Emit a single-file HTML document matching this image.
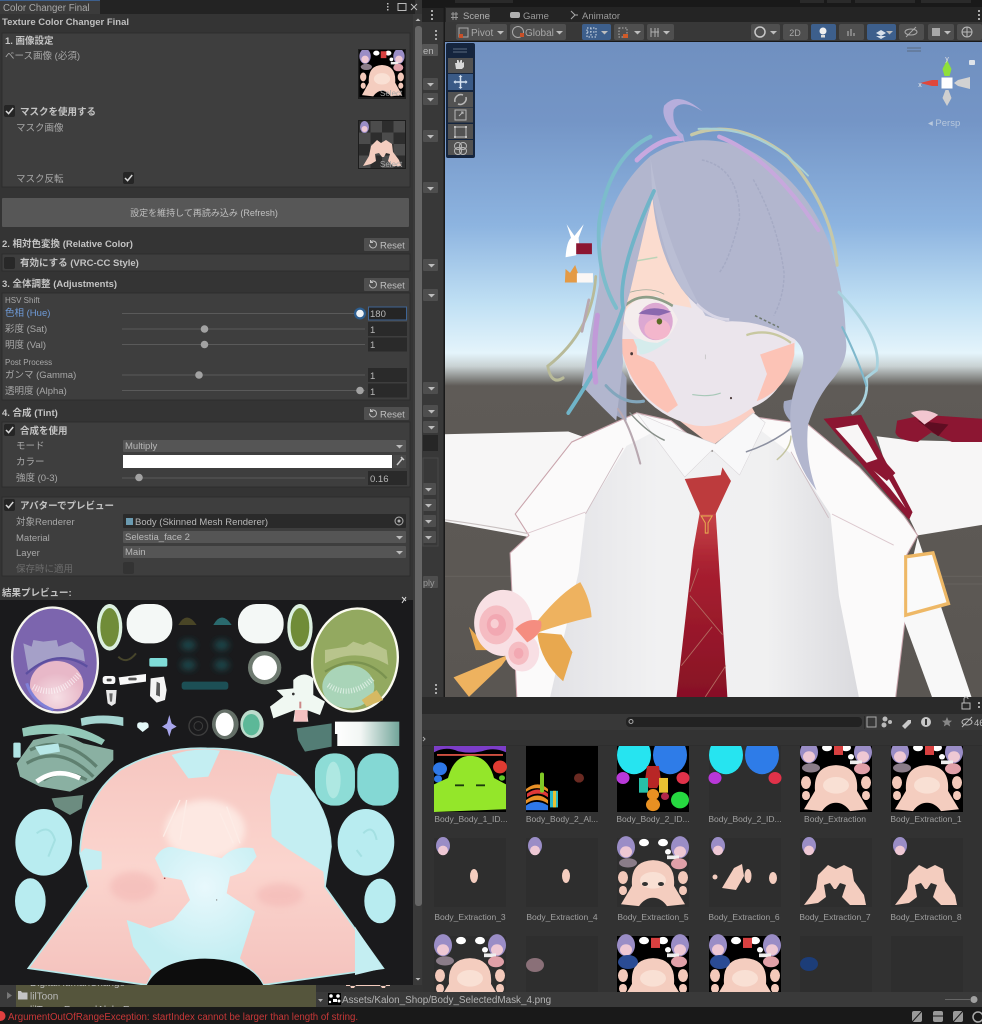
<!DOCTYPE html>
<html><head><meta charset="utf-8"><style>
html,body{margin:0;padding:0;background:#333;width:982px;height:1024px;overflow:hidden}
svg{display:block;font-family:"Liberation Sans","Noto Sans CJK JP",sans-serif}
#root{filter:blur(.35px)}
.l{font-size:9.5px;fill:#a8a8a8}
.b{font-size:9.5px;fill:#c4c4c4;font-weight:bold}
.g{font-size:8.5px;fill:#a0a0a0;text-anchor:middle}
.v{font-size:9.5px;fill:#b8b8b8}
</style></head><body>
<svg id="root" width="982" height="1024" viewBox="0 0 982 1024" xmlns="http://www.w3.org/2000/svg">
<defs>
<filter id="s" x="-5%" y="-5%" width="110%" height="110%"><feGaussianBlur stdDeviation="0.35"/></filter>
<filter id="m" x="-30%" y="-30%" width="160%" height="160%"><feGaussianBlur stdDeviation="10"/></filter>
<linearGradient id="sky" x1="0" y1="0" x2="0" y2="1">
<stop offset="0" stop-color="#7090c0"/><stop offset=".12" stop-color="#7495c6"/><stop offset=".28" stop-color="#8db4e0"/><stop offset=".4" stop-color="#c0e0f4"/><stop offset=".475" stop-color="#e4f4fb"/><stop offset=".495" stop-color="#c9d2d3"/><stop offset=".525" stop-color="#5f5b57"/><stop offset="1" stop-color="#5a5652"/>
</linearGradient>
<linearGradient id="shirt" x1="0" y1="0" x2="1" y2="0"><stop offset="0" stop-color="#e2e2e6"/><stop offset=".35" stop-color="#f1f1f2"/><stop offset=".7" stop-color="#f0f0f1"/><stop offset="1" stop-color="#dadade"/></linearGradient>
<linearGradient id="tie" x1="0" y1="0" x2="0" y2="1"><stop offset="0" stop-color="#c9474a"/><stop offset=".3" stop-color="#a82030"/><stop offset="1" stop-color="#861025"/></linearGradient>
<linearGradient id="gr" x1="0" y1="0" x2="1" y2="0"><stop offset="0" stop-color="#fff"/><stop offset=".4" stop-color="#f2f6f4"/><stop offset="1" stop-color="#72a59a"/></linearGradient>
<radialGradient id="pe" cx=".5" cy=".75" r=".5"><stop offset="0" stop-color="#f6dfe5"/><stop offset="1" stop-color="#e8b8c8"/></radialGradient>
<radialGradient id="fc" gradientUnits="userSpaceOnUse" cx="615" cy="860" r="230"><stop offset="0" stop-color="#e8f8fc"/><stop offset="1" stop-color="#c4eef2"/></radialGradient>
<linearGradient id="pp" x1="0" y1="0" x2="0" y2="1"><stop offset="0" stop-color="#f6c6c0"/><stop offset=".5" stop-color="#fbd5ce"/><stop offset="1" stop-color="#f4c2bd"/></linearGradient>
<clipPath id="cs"><rect x="445" y="42" width="537" height="655"/></clipPath>
<clipPath id="cg"><rect x="423" y="746" width="559" height="246"/></clipPath>
<clipPath id="ct"><rect x="0" y="600" width="413" height="385"/></clipPath>
<clipPath id="cf"><rect x="16" y="985" width="300" height="22"/></clipPath>

<g id="tp">
<ellipse cx="9" cy="10" rx="9" ry="12" fill="#9a8dc6"/><ellipse cx="9" cy="15" rx="6" ry="6" fill="#eec8d4"/>
<ellipse cx="63" cy="10" rx="9" ry="12" fill="#9a8dc6"/><ellipse cx="63" cy="15" rx="6" ry="6" fill="#eec8d4"/>
<ellipse cx="27" cy="5" rx="5" ry="4" fill="#fff"/><ellipse cx="46" cy="5" rx="5" ry="4" fill="#fff"/>
<rect x="50" y="19" width="12" height="4" fill="#eee"/><circle cx="51" cy="15" r="3" fill="#fff"/>
<ellipse cx="11" cy="27" rx="9" ry="5" fill="#8a7c88"/>
<ellipse cx="62" cy="28" rx="8" ry="6" fill="#e0a0a8"/>
<ellipse cx="6" cy="43" rx="5" ry="7" fill="#f3c9ba"/><ellipse cx="66" cy="43" rx="5" ry="7" fill="#f3c9ba"/>
<ellipse cx="6" cy="57" rx="4" ry="5" fill="#f3c9ba"/><ellipse cx="66" cy="57" rx="4" ry="5" fill="#f3c9ba"/>
<path d="M4,72 L15,52 Q13,25 36,24 Q59,25 57,52 L68,72 L50,74 Q44,65 36,65 Q28,65 22,74Z" fill="#f4cdbf"/>
<ellipse cx="36" cy="46" rx="13" ry="9" fill="#f9e0d4"/>
</g>
<g id="tex">
<rect width="72" height="75" fill="#000"/>
<use href="#tp"/>
<rect x="34" y="2" width="9" height="11" fill="#d84040"/>
</g>
<g id="txb">
<rect width="72" height="72" fill="#2d2d2d"/>
<ellipse cx="9" cy="8" rx="7" ry="9" fill="#9a8dc6"/><ellipse cx="9" cy="13" rx="5" ry="5" fill="#eec8d4"/>
</g>
<path id="cm" d="M0,4 L2.6,6.6 L7.2,1" fill="none" stroke="#d8d8d8" stroke-width="1.5"/>
<path id="ar" d="M0,0h7l-3.5,3.5z" fill="#bdbdbd"/>
</defs>

<!-- base -->
<rect width="982" height="1024" fill="#333"/>

<!-- top dark bars -->
<rect x="415" y="0" width="567" height="42" fill="#1d1d1d"/>
<rect x="422" y="0" width="560" height="7" fill="#191919"/>
<g fill="#2a2a2a"><rect x="455" y="0" width="58" height="3"/><rect x="800" y="0" width="24" height="3"/><rect x="827" y="0" width="24" height="3"/><rect x="855" y="0" width="60" height="3"/><rect x="921" y="0" width="50" height="3"/></g>
<rect x="444" y="7" width="538" height="15" fill="#242424"/>
<rect x="446" y="8" width="44" height="15" fill="#3a3a3a"/>
<text x="463" y="19" font-size="9.5" fill="#b0b0b0">Scene</text>
<text x="523" y="19" font-size="9.5" fill="#9a9a9a">Game</text>
<text x="582" y="19" font-size="9.5" fill="#9a9a9a">Animator</text>
<g stroke="#9a9a9a" fill="none" stroke-width="1"><path d="M453,12v8M456,12v8M451,14h7M451,17.500h7"/></g>
<rect x="510" y="12" width="10" height="6" rx="2" fill="#b0b0b0"/>
<path d="M571,11l4,4l-4,4M575,15h3" stroke="#aaa" fill="none"/>
<g fill="#aaa"><rect x="978" y="10" width="2" height="2"/><rect x="978" y="14" width="2" height="2"/><rect x="978" y="18" width="2" height="2"/></g>

<!-- scene toolbar -->
<rect x="445" y="22" width="537" height="20" fill="#383838"/>
<rect x="445" y="41" width="537" height="1.500" fill="#181818"/>
<g fill="#4f4f4f">
<rect x="456" y="24" width="51" height="16" rx="2"/><rect x="510" y="24" width="56" height="16" rx="2"/>
<rect x="614" y="24" width="30" height="16" rx="2"/><rect x="647" y="24" width="27" height="16" rx="2"/>
<rect x="751" y="24" width="29" height="16" rx="2"/><rect x="783" y="24" width="25" height="16" rx="2"/>
<rect x="839" y="24" width="25" height="16" rx="2"/><rect x="899" y="24" width="25" height="16" rx="2"/>
<rect x="928" y="24" width="26" height="16" rx="2"/><rect x="957" y="24" width="25" height="16" rx="2"/>
</g>
<g fill="#3d5f8c"><rect x="582" y="24" width="29" height="16" rx="2"/><rect x="811" y="24" width="25" height="16" rx="2"/><rect x="867" y="24" width="29" height="16" rx="2"/></g>
<rect x="459" y="28" width="9" height="9" fill="none" stroke="#aaa"/><rect x="459" y="34" width="4" height="4" fill="#c85028"/>
<text x="471" y="36" font-size="10" fill="#a8a8a8">Pivot</text><use href="#ar" x="497" y="31"/>
<circle cx="518" cy="32" r="5.500" fill="none" stroke="#aaa"/><rect x="520" y="33" width="4" height="4" fill="#c85028"/>
<text x="525" y="36" font-size="10" fill="#a8a8a8">Global</text><use href="#ar" x="556" y="31"/>
<g stroke="#d8e0ea" stroke-dasharray="1.500 1.500" fill="none"><rect x="587" y="28" width="9" height="9"/><path d="M587,32h9M591,28v9"/></g><use href="#ar" x="601" y="31"/>
<g stroke="#b0b0b0" stroke-dasharray="1.500 1.500" fill="none"><rect x="619" y="28" width="8" height="9"/></g><rect x="623" y="34" width="5" height="4" fill="#d05a28"/><use href="#ar" x="634" y="31"/>
<path d="M651,28v9M658,28v9M655,28v9M651,32h8" stroke="#b0b0b0" fill="none"/><use href="#ar" x="663" y="31"/>
<circle cx="760" cy="32" r="5" fill="none" stroke="#c8c8c8" stroke-width="1.500"/><use href="#ar" x="770" y="31"/>
<text x="795" y="36" font-size="9" fill="#a8a8a8" text-anchor="middle">2D</text>
<circle cx="823" cy="31" r="3.500" fill="#f0f0f0"/><rect x="821" y="35" width="4" height="2.500" fill="#ddd"/>
<path d="M848,36v-5M851,36v-7M854,36v-3" stroke="#b8b8b8" fill="none"/>
<path d="M876,33l5,-3l5,3l-5,3zM876,36l5,3l5,-3" fill="#d8e0ea"/><use href="#ar" x="886" y="31"/>
<ellipse cx="911" cy="32" rx="6" ry="3" fill="none" stroke="#aaa"/><path d="M906,37l10,-10" stroke="#aaa"/>
<rect x="932" y="28" width="8" height="8" fill="#a8a8a8"/><use href="#ar" x="944" y="31"/>
<circle cx="967" cy="32" r="5" fill="none" stroke="#bbb"/><path d="M962,32h10M967,27v10" stroke="#bbb"/>

<!-- SCENE -->
<rect x="445" y="42" width="537" height="655" fill="url(#sky)"/>
<g clip-path="url(#cs)" filter="url(#s)">
<g transform="translate(445,90) scale(.3425,.389)">
 <path d="M0,1250H1568M1400,1270H1568" stroke="#6a6662" stroke-width="2"/>
 <!-- arms -->
 <path d="M-10,885 L360,878 L430,900 L250,1150 L-10,1108Z" fill="#f7f6f6"/>
 <path d="M1260,890 L1350,900 L1568,905 L1568,1118 L1380,1145 L1300,1000Z" fill="#f7f6f6"/>
 <path d="M0,1105 Q130,1120 240,1140" stroke="#c8c0c0" stroke-width="3" fill="none"/>
 <!-- red bow right -->
 <path d="M1320,850 L1400,835 L1568,845 L1568,905 L1480,905 L1420,880 L1380,905 Q1320,900 1315,880Z" fill="#8c1630"/>
 <path d="M1380,850 L1440,890 L1470,860Z" fill="#5f0e22"/>
 <path d="M1360,830 Q1400,815 1440,835 L1400,860Z" fill="#f2c6d0"/>
 <!-- jacket -->
 <path d="M190,1190 L245,1145 L205,1090 L370,905 L560,830 L660,850 L780,935 L900,840 L1060,860 L1210,970 L1340,1095 L1380,1145 L1345,1200 L1345,1350 L1315,1568 L210,1568Z" fill="#fbfafa" stroke="#c9a4ac" stroke-width="3"/>
 <!-- shirt -->
 <path d="M530,915 L650,860 L780,930 L900,860 L1010,935 L1125,1090 L1150,1300 L1210,1568 L305,1568 L390,1240 L410,1090Z" fill="url(#shirt)"/>
 <path d="M520,920 L410,1090 M1120,1100 L1010,930" stroke="#cdbcc2" stroke-width="2.500" fill="none"/>
 <path d="M240,1140 L410,1085 M1130,1090 L1310,1170" stroke="#dcc8ce" stroke-width="2.500" fill="none"/>
 <!-- strap -->
 <path d="M1380,1150 L1540,1568 L1425,1568 L1330,1340Z" fill="#f8f8f8"/>
 <path d="M1105,845 L1215,835 L1365,1085 L1355,1105 L1290,1040Z" fill="#8c1630"/>
 <path d="M1140,870 L1205,860 L1345,1075 L1300,1025Z" fill="#f8f6f6"/>
 <path d="M1225,960 L1275,945 L1315,985 L1290,1005Z" fill="#8c1630"/>
 <path d="M1345,1200 L1425,1190 L1470,1320 L1345,1350Z" fill="#fafafa" stroke="#eeb866" stroke-width="9"/>
 <!-- neck -->
 <path d="M670,840 L780,915 L905,830 L880,790 L700,800Z" fill="#fbcfc4"/>
 <!-- collar -->
 <path d="M640,860 L560,830 L700,995 L780,925 L860,990 L935,855 L900,830 L790,910Z" fill="#f8f8f9" stroke="#d8d4d8" stroke-width="1.500"/>
 <!-- tie -->
 <path d="M745,1080 L790,1080 L825,1568 L675,1568 L725,1180Z" fill="url(#tie)"/>
 <path d="M700,1000 L805,990 L810,970 L835,1005 L790,1090 L745,1090Z" fill="#bd3b3d"/>
 <path d="M715,1300 L810,1400 M690,1480 L780,1380 M740,1230 L715,1290 M760,1560 L820,1480" stroke="#b26a5f" stroke-width="2.500" fill="none"/>
 <path d="M748,1095 h32 l-12,18 v26 h-8 v-26z" fill="none" stroke="#e5a850" stroke-width="3"/>
 <!-- face -->
 <path d="M610,270 L530,520 Q495,640 540,740 Q600,830 700,855 Q790,885 900,815 Q1000,780 1025,640 L1000,500 L800,300Z" fill="#ebe5ec"/>
 <path d="M605,280 L530,520 L520,610 Q530,580 600,540 L720,560 L680,450 Q620,370 605,280Z" fill="#fbdccf"/>
 <path d="M510,640 Q530,770 650,830 L680,810 Q640,740 610,700 L560,680 L560,640Z" fill="#fcc3b6"/>
 <path d="M1020,650 L920,680 L940,730 L910,800 Q1000,770 1020,680Z" fill="#fcc3b6"/>
 <path d="M550,640 L660,640 Q600,680 570,680Z" fill="#d5ecec"/>
 <path d="M555,440 L620,430" stroke="#bcd4b8" stroke-width="4" fill="none"/>
 <!-- eye -->
 <path d="M520,590 Q530,530 620,530 Q660,550 680,590 Q660,640 620,650 Q550,650 520,590Z" fill="#f4eded"/>
 <ellipse cx="615" cy="595" rx="50" ry="48" fill="#dca8d2"/>
 <path d="M565,575 Q600,550 660,570 L625,580 Z" fill="#8a68ae"/>
 <ellipse cx="620" cy="615" rx="38" ry="27" fill="#f3b6cc"/>
 <circle cx="626" cy="595" r="8" fill="#5c6a28"/>
 <path d="M525,555 Q580,510 665,555" stroke="#8e9e88" stroke-width="7" fill="none"/>
 <path d="M540,520 Q600,505 640,525" stroke="#a0aa9a" stroke-width="2" fill="none"/>
 <circle cx="545" cy="678" r="4" fill="#483838"/><circle cx="835" cy="792" r="3" fill="#483838"/>
 <path d="M722,783 Q770,790 805,779" stroke="#a8c8b8" stroke-width="3" fill="none"/>
 <path d="M760,680 v12" stroke="#bbb" stroke-width="2"/>
 <path d="M880,630 Q950,610 1010,650" stroke="#c8c8a0" stroke-width="6" fill="none"/>
 <!-- back hair tufts -->
 <path d="M400,760 Q430,690 470,660 L530,740 L530,850 Q470,830 400,760Z" fill="#a0a6be"/>
 <path d="M990,800 L1040,790 L1020,860 Q980,830 990,800Z" fill="#a2a8c2"/>
 <!-- main hair -->
 <path d="M600,170 Q720,100 880,150 Q1050,230 1120,390 Q1170,520 1170,640 Q1180,690 1135,740 Q1085,790 1060,860 Q1050,950 1085,1030 Q1020,960 1010,870 Q1000,800 1040,720 Q1060,670 1020,640 Q920,590 820,595 Q740,570 690,510 Q620,420 605,270 Q580,370 540,520 Q510,600 520,700 L500,850 Q440,800 400,760 Q420,640 450,500 Q445,290 600,170Z" fill="#b2b6ce"/>
 <path d="M600,175 Q640,400 760,580 Q800,590 820,595 Q740,560 690,510 Q640,430 605,270Z" fill="#babed4"/>
 <path d="M750,180 Q860,200 860,330 Q830,440 800,470 M900,230 Q970,340 990,470 Q990,530 960,580" stroke="#a5aac4" stroke-width="4" fill="none" stroke-dasharray="8 4"/>
 <path d="M735,550 Q780,590 830,590" stroke="#d8d6e6" stroke-width="7" fill="none"/>
 <path d="M905,580 L975,610" stroke="#707a70" stroke-width="4" stroke-dasharray="8 6" fill="none"/>
 <!-- colored strands -->
 <g fill="none" stroke-linecap="round">
 <path d="M600,120 Q480,170 450,340 Q440,470 500,560" stroke="#7bbccb" stroke-width="11"/>
 <path d="M560,180 Q630,120 690,125" stroke="#c8a8df" stroke-width="13"/>
 <path d="M610,260 Q500,470 520,560 Q480,670 360,830" stroke="#6fb4c8" stroke-width="11"/>
 <path d="M720,115 Q850,70 1000,170 Q1130,300 1145,450" stroke="#c6c8a8" stroke-width="9"/>
 <path d="M800,120 Q950,170 1090,360" stroke="#c7a8dd" stroke-width="11"/>
 <path d="M740,100 Q920,90 1060,220" stroke="#a8d0d4" stroke-width="5"/>
 <path d="M440,480 Q430,620 300,710 Q310,760 345,740" stroke="#b8ba98" stroke-width="8"/>
 <path d="M445,580 Q430,680 440,750" stroke="#c19ad8" stroke-width="15"/>
 <path d="M1150,520 Q1280,640 1260,720 L1230,740 Q1240,800 1190,830" stroke="#a8d2de" stroke-width="8"/>
 <path d="M1160,610 Q1210,700 1230,760" stroke="#7fb8cc" stroke-width="6"/>
 <path d="M420,540 L400,620" stroke="#b8a8b0" stroke-width="8"/>
 <path d="M505,820 Q540,860 570,960" stroke="#b8a8b0" stroke-width="6"/>
 <path d="M470,760 Q520,810 580,800" stroke="#82a6bc" stroke-width="8"/>
 <path d="M540,830 Q590,880 640,900" stroke="#88908a" stroke-width="4"/>
 <path d="M880,930 Q950,910 1010,870" stroke="#8c90a0" stroke-width="4"/>
 <path d="M970,950 Q1010,920 1010,890" stroke="#c4c4a0" stroke-width="4"/>
 </g>
 <!-- ahoge -->
 <path d="M700,135 Q625,80 640,40 Q680,0 752,55 Q690,20 668,50 Q660,90 695,115Z" fill="#b6aedc"/>
 <!-- hair clip -->
 <path d="M382,425 L352,430 Q355,390 368,380 L355,345 L370,365 L378,375 L405,345 L390,380 Q395,410 382,425Z" fill="#fff"/>
 <rect x="383" y="394" width="46" height="28" fill="#8c1630"/>
 <path d="M350,495 L352,460 L365,470 L380,450 L388,470 L388,495Z" fill="#e49a44"/>
 <rect x="385" y="471" width="47" height="24" fill="#fbf7f5"/>
 <!-- bow -->
 <path d="M270,1365 Q340,1290 395,1265 Q425,1310 428,1355 Q350,1370 270,1395Z" fill="#eeb25e"/>
 <path d="M275,1395 L340,1400 L372,1445 L345,1520 Q280,1470 270,1400Z" fill="#e8a850"/>
 <path d="M190,1450 L25,1510 L70,1560 L165,1480Z" fill="#eeb25e"/>
 <path d="M70,1380 L90,1440 L190,1440 L120,1430Z" fill="#e8a850"/>
 <!-- flowers -->
 <circle cx="170" cy="1370" r="85" fill="#f8e0e4"/><circle cx="225" cy="1445" r="50" fill="#f8dfe4"/>
 <circle cx="150" cy="1375" r="50" fill="#f5bcc2"/><circle cx="150" cy="1375" r="28" fill="#f2a8b2"/><circle cx="145" cy="1372" r="12" fill="#f8d0d4"/>
 <circle cx="215" cy="1448" r="30" fill="#f5bcc2"/><circle cx="215" cy="1448" r="14" fill="#f2a8b2"/>
 <path d="M205,1385 Q240,1355 280,1365 Q290,1395 240,1420Z" fill="#f58d80"/>
 </g>
</g>
<!-- tool palette -->
<rect x="446" y="43" width="29" height="115" rx="2" fill="#15253e"/>
<path d="M453,49h14M453,52h14" stroke="#5a6a80"/>
<g fill="#525252"><rect x="448" y="58" width="25" height="15"/><rect x="448" y="92" width="25" height="15"/><rect x="448" y="107.500" width="25" height="15"/><rect x="448" y="124" width="25" height="15"/><rect x="448" y="140" width="25" height="15"/></g>
<rect x="448" y="74" width="25" height="16" fill="#3a5a86"/>
<path d="M456,69l-1,-6 2,0 0,-3 1.500,0 1,3 1,-3 1.500,0 0,3 2,-1 0,5 -2,2 -5,0z" fill="#d8d8d8"/>
<path d="M460.500,76v12M454.500,82h12" stroke="#d8e4f2" stroke-width="1.500"/><path d="M458.500,77l2,-2 2,2zM458.500,87l2,2 2,-2zM455.500,80l-2,2 2,2zM465.500,80l2,2 -2,2z" fill="#d8e4f2"/>
<path d="M455,102a6,6 0 0 1 8,-7M466,97a6,6 0 0 1 -8,7" stroke="#b8b8b8" fill="none" stroke-width="1.500"/>
<rect x="455" y="110" width="11" height="10" fill="none" stroke="#b8b8b8"/><path d="M459,116l4,-4M461,112h2v2" stroke="#b8b8b8" fill="none"/>
<rect x="455" y="127" width="11" height="10" fill="none" stroke="#c0c0c0"/><g fill="#c0c0c0"><rect x="454" y="126" width="2" height="2"/><rect x="465" y="126" width="2" height="2"/><rect x="454" y="136" width="2" height="2"/><rect x="465" y="136" width="2" height="2"/></g>
<g fill="none" stroke="#b8b8b8"><circle cx="458" cy="146" r="3.500"/><circle cx="463" cy="146" r="3.500"/><circle cx="458" cy="151" r="3.500"/><circle cx="463" cy="151" r="3.500"/></g>
<path d="M907,48h14M907,51h14" stroke="#5a6a80"/>
<!-- gizmo -->
<path d="M947,60l-4.500,9 2,7 5,0 2,-7z" fill="#8fe03a"/>
<path d="M920,83l12,-3 6,0 0,6 -6,0z" fill="#e0483c"/>
<path d="M970,77l-12,3 -4,3 4,3 12,3z" fill="#d2d2d2"/>
<path d="M947,106l-4.500,-8 3,-8 3,0 3,8z" fill="#cfcfcf"/>
<rect x="941.500" y="77.500" width="11" height="11" fill="#fff"/>
<text x="947" y="61" font-size="7" fill="#e8e8e8" text-anchor="middle">y</text>
<text x="920" y="87" font-size="7" fill="#e8e8e8" text-anchor="middle">x</text>
<rect x="969" y="60" width="6" height="5" rx="1" fill="#dfe4ea"/>
<text x="928" y="126" font-size="9.500" fill="#b8c8dc">&#9666; Persp</text>

<!-- middle strip -->
<rect x="422" y="0" width="23" height="8" fill="#191919"/>
<rect x="422" y="8" width="22" height="690" fill="#383838"/>
<rect x="422" y="8" width="22" height="14" fill="#252525"/>
<rect x="443.500" y="8" width="1.500" height="690" fill="#1a1a1a"/>
<g fill="#aaa"><rect x="431" y="10" width="2" height="2"/><rect x="431" y="14" width="2" height="2"/><rect x="431" y="18" width="2" height="2"/>
<rect x="435" y="30" width="2" height="2"/><rect x="435" y="34" width="2" height="2"/><rect x="435" y="38" width="2" height="2"/></g>
<rect x="422" y="44" width="16" height="12" rx="1" fill="#565656"/>
<text x="423" y="54" font-size="9.500" fill="#b8b8b8">en</text>
<g fill="#4e4e4e">
<rect x="423" y="78" width="15" height="12" rx="1"/><rect x="423" y="93" width="15" height="12" rx="1"/><rect x="423" y="130" width="15" height="12" rx="1"/>
<rect x="423" y="182" width="15" height="11" rx="1"/><rect x="423" y="259" width="15" height="12" rx="1"/><rect x="423" y="289" width="15" height="12" rx="1"/>
<rect x="423" y="382" width="15" height="12" rx="1"/><rect x="423" y="405" width="15" height="12" rx="1"/><rect x="423" y="421" width="15" height="12" rx="1"/>
<rect x="423" y="483" width="13" height="12" rx="1"/><rect x="423" y="499" width="13" height="12" rx="1"/><rect x="423" y="515" width="13" height="12" rx="1"/><rect x="423" y="531" width="13" height="12" rx="1"/>
<rect x="423" y="576" width="15" height="12" rx="1"/>
</g>
<rect x="423" y="435" width="15" height="16" fill="#262626"/>
<rect x="423" y="458" width="15" height="88" fill="none" stroke="#484848"/>
<g><use href="#ar" x="427" y="83"/><use href="#ar" x="427" y="98"/><use href="#ar" x="427" y="135"/><use href="#ar" x="427" y="187"/><use href="#ar" x="428" y="264"/><use href="#ar" x="428" y="294"/><use href="#ar" x="428" y="387"/><use href="#ar" x="428" y="410"/><use href="#ar" x="428" y="426"/><use href="#ar" x="425" y="488"/><use href="#ar" x="425" y="504"/><use href="#ar" x="425" y="520"/><use href="#ar" x="425" y="536"/></g>
<text x="423" y="586" font-size="9" fill="#999">ply</text>
<g fill="#aaa"><rect x="435" y="684" width="2" height="2"/><rect x="435" y="688" width="2" height="2"/><rect x="435" y="692" width="2" height="2"/></g>

<!-- PROJECT -->
<rect x="422" y="697" width="560" height="17" fill="#2a2a2a"/>
<rect x="422" y="714" width="560" height="16" fill="#383838"/>
<rect x="422" y="730" width="560" height="16" fill="#333"/>
<rect x="422" y="745.500" width="560" height="1" fill="#2a2a2a"/>
<rect x="626" y="717" width="236" height="10" rx="4" fill="#222"/>
<circle cx="631" cy="721.500" r="2" fill="none" stroke="#aaa"/>
<rect x="864" y="716" width="1" height="13" fill="#2a2a2a"/>
<rect x="867" y="717" width="9" height="10" fill="none" stroke="#aaa"/>
<circle cx="885" cy="719" r="2.500" fill="#bbb"/><circle cx="884" cy="725" r="2.500" fill="#bbb"/><circle cx="890" cy="722" r="2" fill="#bbb"/>
<path d="M902,726l6,-6 3,0 0,3 -6,6z" fill="#c8c8c8"/>
<circle cx="926" cy="722" r="5" fill="#c8c8c8"/><rect x="925" y="719" width="2" height="6" fill="#383838"/>
<path d="M947,717l1.500,3.500 3.500,.3 -2.700,2.200 .9,3.500 -3.200,-2 -3.200,2 .9,-3.500 -2.700,-2.200 3.500,-.3z" fill="#888"/>
<ellipse cx="967" cy="722" rx="5" ry="3" fill="none" stroke="#bbb"/><path d="M962,727l10,-10" stroke="#bbb"/>
<text x="974" y="726" font-size="9.500" fill="#bbb">46</text>
<path d="M964,703v-4a2,2 0 0 1 4,0M962,703h8v6h-8z" fill="none" stroke="#bbb"/>
<g fill="#aaa"><rect x="978" y="702" width="2" height="2"/><rect x="978" y="706" width="2" height="2"/></g>
<path d="M423,737l2,2 -2,2" stroke="#aaa" fill="none"/>

<g clip-path="url(#cg)" filter="url(#s)">
<rect x="423" y="746" width="559" height="246" fill="#333"/>
<!-- row1 -->
<g transform="translate(434,743) scale(1,.92)">
<rect width="72" height="75" fill="#000"/>
<path d="M0,2H72V10Q60,4 48,9Q36,12 24,9Q12,3 0,10Z" fill="#7c3cc8"/><path d="M0,0H72V3H0Z" fill="#28c060"/><path d="M3,12h66v2H3z" fill="#d05040"/>
<circle cx="6" cy="28" r="7" fill="#2f78e8"/><circle cx="66" cy="26" r="7" fill="#e03a30"/><circle cx="4" cy="39" r="4" fill="#2f78e8"/><circle cx="68" cy="38" r="3" fill="#60c828"/>
<path d="M0,75 L0,45 L14,38 Q20,14 36,14 Q54,14 60,38 L72,45 L72,72Z" fill="#94e62c"/>
<rect x="21" y="45" width="9" height="2" fill="#1a3a10"/><rect x="42" y="45" width="9" height="2" fill="#1a3a10"/>
</g>
<g transform="translate(526,743) scale(1,.92)">
<rect width="72" height="75" fill="#000"/>
<path d="M0,50q12,-10 22,0v3q-11,-8 -22,0z M0,62q12,-10 22,0v4q-11,-8 -22,0z" fill="#e89028"/>
<path d="M1,55q11,-9 21,0v4q-10,-8 -21,0z" fill="#e03838"/><path d="M0,68q10,-8 22,0v5H0z" fill="#2f78e8"/>
<rect x="14" y="32" width="4" height="22" rx="2" fill="#80c828"/>
<rect x="24" y="52" width="8" height="18" fill="#2ab8c8"/><rect x="27" y="52" width="3" height="18" fill="#e8c030"/>
<circle cx="53" cy="38" r="5" fill="#6a2a20"/>
</g>
<g transform="translate(617,743) scale(1,.92)">
<rect width="72" height="75" fill="#000"/>
<ellipse cx="17" cy="13" rx="17" ry="21" fill="#28e4f0"/><ellipse cx="53" cy="13" rx="17" ry="21" fill="#2f7ce8"/>
<circle cx="6" cy="38" r="6.500" fill="#b838d8"/><circle cx="66" cy="38" r="6.500" fill="#e03048"/>
<path d="M30,25h12l2,16 -4,8h-8l-4,-8z" fill="#b82828"/>
<rect x="22" y="38" width="9" height="16" fill="#28c0a8"/><rect x="42" y="38" width="9" height="16" fill="#e8c030"/>
<circle cx="36" cy="56" r="6" fill="#e89020"/><circle cx="36" cy="67" r="7" fill="#e89020"/><circle cx="48" cy="58" r="4" fill="#b02848"/>
<circle cx="63" cy="62" r="9" fill="#28d840"/>
</g>
<g transform="translate(709,743) scale(1,.92)">
<rect width="72" height="75" fill="#2d2d2d"/>
<ellipse cx="17" cy="13" rx="17" ry="21" fill="#28e4f0"/><ellipse cx="53" cy="13" rx="17" ry="21" fill="#2f7ce8"/>
<circle cx="6" cy="38" r="6.500" fill="#b838d8"/><circle cx="66" cy="38" r="6.500" fill="#e03048"/>
</g>
<use href="#tex" transform="translate(800,743) scale(1,.92)"/><use href="#tex" transform="translate(891,743) scale(1,.92)"/>
<!-- row2 -->
<use href="#txb" transform="translate(434,838) scale(1,.96)"/><ellipse cx="474" cy="876" rx="4" ry="7" fill="#f4cdbf"/>
<use href="#txb" transform="translate(526,838) scale(1,.96)"/><ellipse cx="566" cy="876" rx="4" ry="7" fill="#f4cdbf"/>
<g transform="translate(617,838) scale(1,.92)"><rect width="72" height="75" fill="#2d2d2d"/><use href="#tp"/></g><ellipse cx="645" cy="884" rx="3" ry="2" fill="#333"/><ellipse cx="661" cy="884" rx="3" ry="2" fill="#333"/>
<use href="#txb" transform="translate(709,838) scale(1,.96)"/><path d="M722,888l12,-20 8,-4 2,12 -8,14z" fill="#f4cdbf"/><ellipse cx="748" cy="876" rx="3.500" ry="7" fill="#f4cdbf"/><ellipse cx="773" cy="878" rx="4" ry="6" fill="#f4cdbf"/><circle cx="715" cy="877" r="2.500" fill="#f4cdbf"/>
<use href="#txb" transform="translate(800,838) scale(1,.96)"/><path d="M804,905l12,-16 2,-14 10,-10 8,4 8,-4 8,4 2,12 10,14 2,10h-16l-8,-8 4,-12 -6,-2 -4,6h-2l-4,-6 -6,2 2,12 -8,6z" fill="#f4cdbf"/>
<use href="#txb" transform="translate(891,838) scale(1,.96)"/><path d="M895,905l12,-16 2,-14 10,-10 8,4 8,-4 8,4 2,12 10,14 2,10h-16l-8,-8 4,-12 -6,-2 -4,6h-2l-4,-6 -6,2 2,12 -8,6z" fill="#f4cdbf"/>
<!-- row3 -->
<g transform="translate(434,936) scale(1,.92)"><rect width="72" height="75" fill="#2d2d2d"/><use href="#tp"/></g>
<rect x="526" y="936" width="72" height="60" fill="#2d2d2d"/><ellipse cx="535" cy="965" rx="9" ry="7" fill="#8a7078"/>
<use href="#tex" transform="translate(617,936) scale(1,.92)"/><use href="#tex" transform="translate(709,936) scale(1,.92)"/>
<ellipse cx="628" cy="962" rx="10" ry="7" fill="#2c4c94"/><ellipse cx="720" cy="962" rx="10" ry="7" fill="#2c4c94"/>
<rect x="800" y="936" width="72" height="60" fill="#2d2d2d"/><ellipse cx="809" cy="964" rx="9" ry="7" fill="#1f3c78"/>
<rect x="891" y="936" width="72" height="60" fill="#2d2d2d"/>
</g>
<g>
<text class="g" x="471" y="822">Body_Body_1_ID...</text><text class="g" x="562" y="822">Body_Body_2_Al...</text><text class="g" x="653" y="822">Body_Body_2_ID...</text><text class="g" x="745" y="822">Body_Body_2_ID...</text><text class="g" x="835" y="822">Body_Extraction</text><text class="g" x="926" y="822">Body_Extraction_1</text>
<text class="g" x="470" y="920">Body_Extraction_3</text><text class="g" x="562" y="920">Body_Extraction_4</text><text class="g" x="653" y="920">Body_Extraction_5</text><text class="g" x="744" y="920">Body_Extraction_6</text><text class="g" x="835" y="920">Body_Extraction_7</text><text class="g" x="926" y="920">Body_Extraction_8</text>
</g>
<!-- bottom bars -->
<rect x="316" y="992" width="666" height="16" fill="#3a3a3a"/>
<rect x="945" y="999" width="25" height="1" fill="#666"/><circle cx="974" cy="999.500" r="3.500" fill="#a0a0a0"/>
<text x="342" y="1003" font-size="9.900" fill="#b4b4b4">Assets/Kalon_Shop/Body_SelectedMask_4.png</text>
<rect x="0" y="1007" width="982" height="17" fill="#191919"/>

<!-- LEFT PANEL -->
<rect x="0" y="0" width="422" height="985" fill="#343434"/>
<rect x="0" y="0" width="415" height="14" fill="#232323"/>
<rect x="0" y="0" width="100" height="14" fill="#3b3b3b"/>
<rect x="0" y="0" width="100" height="1" fill="#3d5f8c"/>
<text x="3" y="11" font-size="9.700" fill="#a8a8a8">Color Changer Final</text>
<g fill="#bbb"><rect x="387" y="3" width="1.500" height="1.500"/><rect x="387" y="6" width="1.500" height="1.500"/><rect x="387" y="9" width="1.500" height="1.500"/></g>
<rect x="398" y="3.500" width="8" height="7" fill="none" stroke="#bbb"/>
<path d="M411,4l6,6M417,4l-6,6" stroke="#bbb"/>
<text x="2" y="25" font-size="9.500" fill="#c0c0c0" font-weight="bold">Texture Color Changer Final</text>

<!-- scrollbar -->
<rect x="413" y="14" width="9" height="971" fill="#3a3a3a"/>
<rect x="415" y="26" width="7" height="880" rx="3" fill="#666"/>
<path d="M415.500,21h5l-2.500,-2.500z" fill="#bbb"/><path d="M415.500,978h5l-2.500,2.500z" fill="#bbb"/>

<!-- section 1 -->
<rect x="2" y="33" width="408" height="154" fill="#3e3e3e" stroke="#2d2d2d"/>
<text class="b" x="5" y="44">1. 画像設定</text>
<text class="l" x="5" y="59">ベース画像 (必須)</text>
<rect x="358" y="49" width="48" height="50" fill="#1d1d1d"/>
<svg x="359" y="50" width="46" height="47" viewBox="0 0 72 75"><use href="#tex"/></svg>
<text x="380" y="96" font-size="8" fill="#aaa">Select</text>
<rect x="4" y="105" width="11" height="12" rx="2" fill="#252525"/><use href="#cm" x="6" y="107"/>
<text class="b" x="20" y="115">マスクを使用する</text>
<text class="l" x="16" y="131">マスク画像</text>
<rect x="358" y="120" width="48" height="49" fill="#1d1d1d"/>
<g fill="#4c4c4c"><rect x="359" y="121" width="46" height="47"/></g>
<g fill="#2d2d2d"><rect x="359" y="121" width="11.500" height="11.500"/><rect x="382" y="121" width="11.500" height="11.500"/><rect x="370.500" y="132.500" width="11.500" height="11.500"/><rect x="393.500" y="132.500" width="11.500" height="11.500"/><rect x="359" y="144" width="11.500" height="11.500"/><rect x="382" y="144" width="11.500" height="11.500"/><rect x="370.500" y="155.500" width="11.500" height="12.500"/><rect x="393.500" y="155.500" width="11.500" height="12.500"/></g>
<ellipse cx="364.500" cy="127" rx="4.500" ry="6" fill="#9a8dc6"/><ellipse cx="364.500" cy="129" rx="3" ry="3" fill="#eec8d4"/>
<path d="M363,166l6,-10 2,-10 6,-6 4,3 5,-3 6,4 1,8 6,8 2,6h-8l-5,-5 2,-7 -4,-1 -2,4h-2l-3,-4 -4,1 1,7 -5,3z" fill="#f4cdbf"/>
<text x="380" y="167" font-size="8" fill="#aaa">Select</text>
<text class="l" x="16" y="182">マスク反転</text>
<rect x="123" y="172" width="11" height="12" rx="2" fill="#252525"/><use href="#cm" x="125" y="174"/>

<rect x="2" y="198" width="407" height="29" rx="1" fill="#575757"/>
<text x="204" y="216" font-size="9" fill="#c0c0c0" text-anchor="middle">設定を維持して再読み込み (Refresh)</text>

<!-- section 2 -->
<text class="b" x="2" y="247">2. 相対色変換 (Relative Color)</text>
<rect x="364" y="238" width="45" height="13" rx="1" fill="#4f4f4f"/>
<path d="M370.500,242a3.500,3.500 0 1 1 -1,2.500M370.500,240v2.500h2.500" stroke="#c0c0c0" fill="none"/><text x="380" y="248.500" font-size="9.500" fill="#c0c0c0">Reset</text>
<rect x="2" y="254" width="408" height="17" fill="#3e3e3e" stroke="#2d2d2d"/>
<rect x="4" y="257" width="11" height="12" rx="2" fill="#282828"/>
<text class="b" x="20" y="266">有効にする (VRC-CC Style)</text>

<!-- section 3 -->
<text class="b" x="2" y="287">3. 全体調整 (Adjustments)</text>
<rect x="364" y="278" width="45" height="13" rx="1" fill="#4f4f4f"/>
<path d="M370.500,282a3.500,3.500 0 1 1 -1,2.500M370.500,280v2.500h2.500" stroke="#c0c0c0" fill="none"/><text x="380" y="288.500" font-size="9.500" fill="#c0c0c0">Reset</text>
<rect x="2" y="293" width="408" height="107" fill="#3e3e3e" stroke="#2d2d2d"/>
<text x="5" y="303" font-size="8" fill="#a8a8a8">HSV Shift</text>
<text x="5" y="316" font-size="9.500" fill="#6f9bd8">色相 (Hue)</text>
<text class="l" x="5" y="332">彩度 (Sat)</text>
<text class="l" x="5" y="348">明度 (Val)</text>
<text x="5" y="365" font-size="8" fill="#a8a8a8">Post Process</text>
<text class="l" x="5" y="378">ガンマ (Gamma)</text>
<text class="l" x="5" y="394">透明度 (Alpha)</text>
<g fill="#5a5a5a"><rect x="122" y="313" width="243" height="1"/><rect x="122" y="328.500" width="243" height="1"/><rect x="122" y="344" width="243" height="1"/><rect x="122" y="374.500" width="243" height="1"/><rect x="122" y="390" width="243" height="1"/></g>
<circle cx="360" cy="313.500" r="6" fill="#2d5d8e"/><circle cx="360" cy="313.500" r="3.800" fill="#eef2f6"/>
<g fill="#a2a2a2"><circle cx="204.500" cy="329" r="3.800"/><circle cx="204.500" cy="344.500" r="3.800"/><circle cx="199" cy="375" r="3.800"/><circle cx="360" cy="390.500" r="3.800"/></g>
<rect x="368.500" y="307" width="38" height="13" fill="#252525" stroke="#3e6494"/>
<g fill="#2a2a2a"><rect x="368" y="322" width="39" height="14"/><rect x="368" y="337.500" width="39" height="14"/><rect x="368" y="368" width="39" height="14"/><rect x="368" y="383.500" width="39" height="14"/></g>
<text class="v" x="370" y="317">180</text><text class="v" x="370" y="333">1</text><text class="v" x="370" y="348">1</text><text class="v" x="370" y="379">1</text><text class="v" x="370" y="395">1</text>

<!-- section 4 -->
<text class="b" x="2" y="416">4. 合成 (Tint)</text>
<rect x="364" y="407" width="45" height="13" rx="1" fill="#4f4f4f"/>
<path d="M370.500,411a3.500,3.500 0 1 1 -1,2.500M370.500,409v2.500h2.500" stroke="#c0c0c0" fill="none"/><text x="380" y="417.500" font-size="9.500" fill="#c0c0c0">Reset</text>
<rect x="2" y="422" width="408" height="65" fill="#3e3e3e" stroke="#2d2d2d"/>
<rect x="4" y="424" width="11" height="12" rx="2" fill="#252525"/><use href="#cm" x="6" y="426"/>
<text class="b" x="20" y="434">合成を使用</text>
<text class="l" x="16" y="449">モード</text>
<rect x="123" y="440" width="283" height="12" rx="1" fill="#555"/>
<text class="v" x="125" y="449">Multiply</text><use href="#ar" x="396" y="445"/>
<text class="l" x="16" y="465">カラー</text>
<rect x="123" y="455" width="269" height="13" fill="#fff"/>
<rect x="393" y="455" width="13" height="13" fill="#484848"/><path d="M397,465l5,-6M401,457l3,3" stroke="#c8c8c8" stroke-width="1.500"/>
<text class="l" x="16" y="481">強度 (0-3)</text>
<rect x="122" y="477.500" width="243" height="1" fill="#5a5a5a"/>
<circle cx="139" cy="477.500" r="3.800" fill="#a2a2a2"/>
<rect x="368" y="471" width="39" height="14" fill="#2a2a2a"/>
<text class="v" x="370" y="482">0.16</text>

<!-- section 5 -->
<rect x="2" y="497" width="408" height="79" fill="#3e3e3e" stroke="#2d2d2d"/>
<rect x="4" y="499" width="11" height="12" rx="2" fill="#252525"/><use href="#cm" x="6" y="501"/>
<text class="b" x="20" y="509">アバターでプレビュー</text>
<text class="l" x="16" y="525">対象Renderer</text>
<rect x="123" y="514" width="283" height="14" rx="1" fill="#2a2a2a"/>
<rect x="126" y="518" width="7" height="7" fill="#6a9ab0"/>
<text class="v" x="135" y="525">Body (Skinned Mesh Renderer)</text>
<circle cx="399" cy="521" r="4" fill="none" stroke="#b0b0b0"/><circle cx="399" cy="521" r="1.500" fill="#b0b0b0"/>
<text class="l" x="16" y="541">Material</text>
<rect x="123" y="531" width="283" height="12" rx="1" fill="#555"/>
<text class="v" x="125" y="540">Selestia_face 2</text><use href="#ar" x="396" y="536"/>
<text class="l" x="16" y="556">Layer</text>
<rect x="123" y="546" width="283" height="12" rx="1" fill="#555"/>
<text class="v" x="125" y="555">Main</text><use href="#ar" x="396" y="551"/>
<text x="16" y="572" font-size="9.500" fill="#6c6c6c">保存時に適用</text>
<rect x="123" y="562" width="11" height="12" rx="2" fill="#333"/>
<text class="b" x="2" y="596">結果プレビュー:</text>

<!-- result texture -->
<rect x="0" y="600" width="413" height="385" fill="#1a1a1c"/>
<g clip-path="url(#ct)" filter="url(#s)">
<g transform="translate(0,600) scale(.3333)">
 <!-- purple eye -->
 <ellipse cx="165" cy="180" rx="128" ry="158" transform="rotate(-8 165 180)" fill="#7c65ae" stroke="#f6f6ee" stroke-width="7"/>
 <path d="M70,130 L95,140 L100,120 L130,125 L170,120 L175,140 L215,125 L250,150 L255,185 Q170,150 85,215Z" fill="#a5a0c8"/>
 <path d="M78,222 Q170,140 262,200" stroke="#5c4fa0" stroke-width="7" fill="none"/>
 <ellipse cx="170" cy="255" rx="80" ry="72" fill="url(#pe)"/>
 <path d="M100,260 Q170,300 240,220" stroke="#fff" stroke-width="18" fill="none" stroke-dasharray="3 5" opacity=".6"/>
 <path d="M80,250 Q100,310 160,330" stroke="#7f80d8" stroke-width="9" fill="none"/>
 <!-- green eye -->
 <ellipse cx="1065" cy="180" rx="128" ry="155" transform="rotate(8 1065 180)" fill="#93a960" stroke="#fbfbf0" stroke-width="7"/>
 <path d="M975,150 L1040,140 L1060,125 L1090,135 L1110,125 L1160,150 L1165,195 Q1070,140 975,190Z" fill="#b8c48c"/>
 <path d="M975,215 Q1080,150 1160,235" stroke="#7a9250" stroke-width="7" fill="none"/>
 <ellipse cx="1045" cy="260" rx="78" ry="65" fill="#a9d4b8"/>
 <path d="M985,255 Q1050,300 1120,235" stroke="#fff" stroke-width="16" fill="none" stroke-dasharray="3 5" opacity=".6"/>
 <path d="M1085,300 L1130,270 L1150,300 L1100,320Z" fill="#d6b964"/>
 <!-- green ovals -->
 <ellipse cx="329" cy="82" rx="38" ry="70" fill="#dcf0e0"/><ellipse cx="329" cy="82" rx="28" ry="58" fill="#6f8c38"/>
 <ellipse cx="900" cy="82" rx="38" ry="70" fill="#dcf0e0"/><ellipse cx="900" cy="82" rx="28" ry="58" fill="#6f8c38"/>
 <rect x="380" y="12" width="137" height="118" rx="55" fill="#f4f8f6"/>
 <rect x="714" y="12" width="137" height="118" rx="55" fill="#f4f8f6"/>
 <!-- dim -->
 <path d="M535,75 Q560,30 590,75Z" fill="#4a4428"/>
 <path d="M640,75 Q665,30 695,75Z" fill="#2c6a6e"/>
 <g fill="#1c4a4e" filter="url(#m)"><ellipse cx="565" cy="135" rx="22" ry="15"/><ellipse cx="665" cy="135" rx="22" ry="15"/><ellipse cx="565" cy="195" rx="22" ry="15"/><ellipse cx="665" cy="195" rx="22" ry="15"/></g>
 <rect x="545" y="245" width="140" height="24" rx="8" fill="#1e5054"/>
 <path d="M355,170 Q380,195 408,160" stroke="#46442c" stroke-width="6" fill="none"/>
 <rect x="448" y="174" width="54" height="26" rx="5" fill="#7fdcd8"/>
 <!-- small white -->
 <rect x="308" y="228" width="38" height="24" rx="8" fill="#f8f8f8"/>
 <path d="M356,232 L438,222 L438,245 L360,255Z" fill="#f8f8f8"/>
 <rect x="320" y="236" width="15" height="8" rx="3" fill="#444"/><rect x="385" y="233" width="25" height="8" rx="3" fill="#555"/>
 <path d="M318,270h32l-3,40 -12,8 -12,-8z" fill="#e8e8e8"/><path d="M452,235l40,-5 8,40 -5,30 -25,8 -20,-20z" fill="#f4f4f4"/>
 <path d="M470,245l10,5 0,40 -12,-5z" fill="#5a5a5a"/><path d="M328,280h10l-2,25h-6z" fill="#666"/>
 <!-- circle white -->
 <circle cx="794" cy="203" r="50" fill="#6e7a70"/><circle cx="794" cy="203" r="37" fill="#fff"/>
 <!-- flower -->
 <path d="M880,240 Q910,210 940,235 L940,285 L975,305 L960,345 L920,330 L925,365 L880,365 L885,330 L820,355 L810,320 L850,290 L830,270 L880,265Z" fill="#f0f8f2"/>
 <path d="M885,330 h38 v35 h-40z" fill="#f5c0c0"/>
 <circle cx="880" cy="282" r="4" fill="#333"/><rect x="898" y="305" width="6" height="20" fill="#c88"/>
 <!-- row -->
 <path d="M242,355 Q300,340 370,352 L370,378 Q300,362 245,378Z" fill="#a4d4d0"/>
 <path d="M66,385 Q200,350 315,420 L305,435 Q190,385 70,410Z" fill="#93c8b8"/>
 <path d="M428,396 l-16,-14 q-4,-20 16,-14 q20,-6 18,14z" fill="#e4f8f8"/>
 <path d="M508,345l7,25 15,10 -15,8 -7,22 -7,-22 -15,-8 15,-10z" fill="#a8a6ec"/>
 <circle cx="595" cy="378" r="28" fill="none" stroke="#3e3e3e" stroke-width="4"/><circle cx="595" cy="378" r="13" fill="none" stroke="#3e3e3e" stroke-width="3"/>
 <ellipse cx="676" cy="373" rx="40" ry="45" fill="#657068"/><ellipse cx="674" cy="373" rx="27" ry="35" fill="#fff"/>
 <ellipse cx="756" cy="372" rx="35" ry="42" fill="#bcdccc"/><ellipse cx="754" cy="374" rx="25" ry="32" fill="#5cb898"/>
 <path d="M890,385 L995,370 L995,440 L915,455 L895,420Z" fill="#527d74"/>
 <path d="M1005,365 H1198 V438 H1012 V402 H1005Z" fill="url(#gr)"/>
 <!-- hair piece left -->
 <rect x="40" y="428" width="22" height="45" rx="4" fill="#b0e4e4"/>
 <path d="M50,490 L100,420 L190,400 L250,430 L340,450 L340,480 L280,540 L210,575 L120,560 L60,530Z" fill="#8ab0a2"/>
 <path d="M90,450 Q190,400 290,500 M80,490 Q180,430 280,530 M130,540 Q190,500 260,540" stroke="#5f8070" stroke-width="10" fill="none"/>
 <path d="M110,545 Q170,500 240,535" stroke="#fff" stroke-width="14" fill="none"/>
 <path d="M105,440 L175,430 L180,455 L120,465Z" fill="#b8e8e8"/>
 <path d="M155,595 L250,585 L245,625 L210,645 L165,620Z" fill="#6c8c80"/>
 <!-- tongues -->
 <rect x="945" y="460" width="120" height="157" rx="56" fill="#8ddcd6"/>
 <rect x="1072" y="460" width="124" height="157" rx="56" fill="#84d8d4"/>
 <ellipse cx="1000" cy="540" rx="22" ry="55" fill="#aee8e2"/>
 <!-- ears -->
 <ellipse cx="131" cy="727" rx="85" ry="100" fill="#b8ecf0"/>
 <ellipse cx="1098" cy="727" rx="85" ry="100" fill="#b8ecf0"/>
 <path d="M110,700 Q150,670 165,720 L145,770" stroke="#a4e0e2" stroke-width="6" fill="none"/>
 <path d="M1090,700 Q1120,670 1130,720 M1070,750 L1085,770" stroke="#a4e0e2" stroke-width="6" fill="none"/>
 <ellipse cx="91" cy="903" rx="46" ry="68" fill="#b8ecf0"/>
 <ellipse cx="1140" cy="903" rx="47" ry="67" fill="#b8ecf0"/>
 <!-- face fan: pink base -->
 <path d="M85,1105 L265,860 L240,760 Q245,600 360,510 Q480,440 620,445 Q800,445 900,530 Q990,630 993,740 L975,860 L1150,1105 L790,1155 Q750,1075 615,1075 Q480,1080 440,1155Z" fill="url(#pp)" stroke="#b8e8ea" stroke-width="5"/>
 <ellipse cx="615" cy="690" rx="120" ry="90" fill="#fde8e2" filter="url(#m)"/>
 <ellipse cx="400" cy="860" rx="70" ry="45" fill="#f2b2b0" opacity=".5" filter="url(#m)"/>
 <ellipse cx="840" cy="885" rx="70" ry="35" fill="#f2b2b0" opacity=".5" filter="url(#m)"/>
 <path d="M540,600 L490,710 M680,620 L720,730 M560,600 L540,720 M660,640 L700,730" stroke="#fdece6" stroke-width="4" fill="none"/>
 <!-- cyan overlays -->
 <path d="M515,465 L565,535 L625,530 L660,452 Q590,440 515,465Z" fill="#c4eef2"/>
 <path d="M832,520 L810,590 L815,710 L860,745 L970,815 L975,860 L993,740 Q990,630 900,530Z" fill="#c4eef2"/>
 <path d="M305,755 L255,745 L240,760 L252,812 L305,808Z" fill="#c4eef2"/>
 <path d="M465,775 Q490,730 530,745 L600,760 L665,775 Q700,735 760,745 L770,770 L735,815 L690,830 L680,880 L765,935 L720,1075 L790,1155 Q750,1075 615,1075 Q480,1080 440,1155 L455,1115 L400,1040 L380,960 L450,985 L520,960 L570,900 L545,840 L490,830Z" fill="url(#fc)"/>
 <path d="M1065,980 L1065,1125 L1150,1105Z" fill="#c4eef2"/>
 <circle cx="494" cy="835" r="2.500" fill="#a04040"/><circle cx="650" cy="900" r="2" fill="#888"/>
 <path d="M440,1156 Q480,1078 615,1076 Q750,1078 790,1156Z" fill="#0e0e10"/>
</g>
</g>
<path d="M402,597l4,4M406,597l-4,6" stroke="#ddd" stroke-width="1" />

<!-- project tree -->
<rect x="0" y="985" width="16" height="22" fill="#3a3a3a"/>
<rect x="16" y="985" width="300" height="22" fill="#55553c"/>
<path d="M7,992l5,3.500 -5,3.500z" fill="#777"/>
<path d="M18,991h3l1,1.500h5.500v7h-9.500z" fill="#c4c4c4"/>
<g clip-path="url(#cf)">
<text x="30" y="986" font-size="10" fill="#bcbcbc">DigitalHumanChange</text>
<text x="30" y="999.500" font-size="10" fill="#bcbcbc">lilToon</text>
<text x="30" y="1013" font-size="10" fill="#bcbcbc">lilToon_FresnelAlphaEx</text>
</g>
<rect x="316" y="985" width="97" height="7" fill="#333"/>
<path d="M346,985h4l1,3h3l2,-3h24l2,3h3l1,-3h4v1h-44z" fill="#f4cdbf"/>
<path d="M318,999h5l-2.500,3z" fill="#aaa"/>
<rect x="328" y="993" width="13" height="12" fill="#000"/>
<g fill="#fff"><circle cx="331" cy="996" r="1.800"/><circle cx="338" cy="996" r="1.800"/><rect x="333" y="999" width="4" height="3"/><circle cx="330" cy="1002" r="1.200"/><circle cx="339" cy="1001" r="1.500"/></g>

<!-- status -->
<circle cx="0.500" cy="1016" r="5" fill="#e04040"/>
<text x="8" y="1020" font-size="9.700" fill="#c83838">ArgumentOutOfRangeException: startIndex cannot be larger than length of string.</text>
<g fill="#999"><rect x="912" y="1011" width="10" height="11" rx="2"/><rect x="933" y="1011" width="10" height="11" rx="2"/><rect x="953" y="1011" width="10" height="11" rx="2"/></g>
<g stroke="#191919" fill="none"><path d="M912,1022l10,-11M933,1016h10M953,1022l10,-11"/></g>
<circle cx="978" cy="1017" r="5" fill="none" stroke="#aaa" stroke-width="1.500"/>
</svg>
</body></html>
